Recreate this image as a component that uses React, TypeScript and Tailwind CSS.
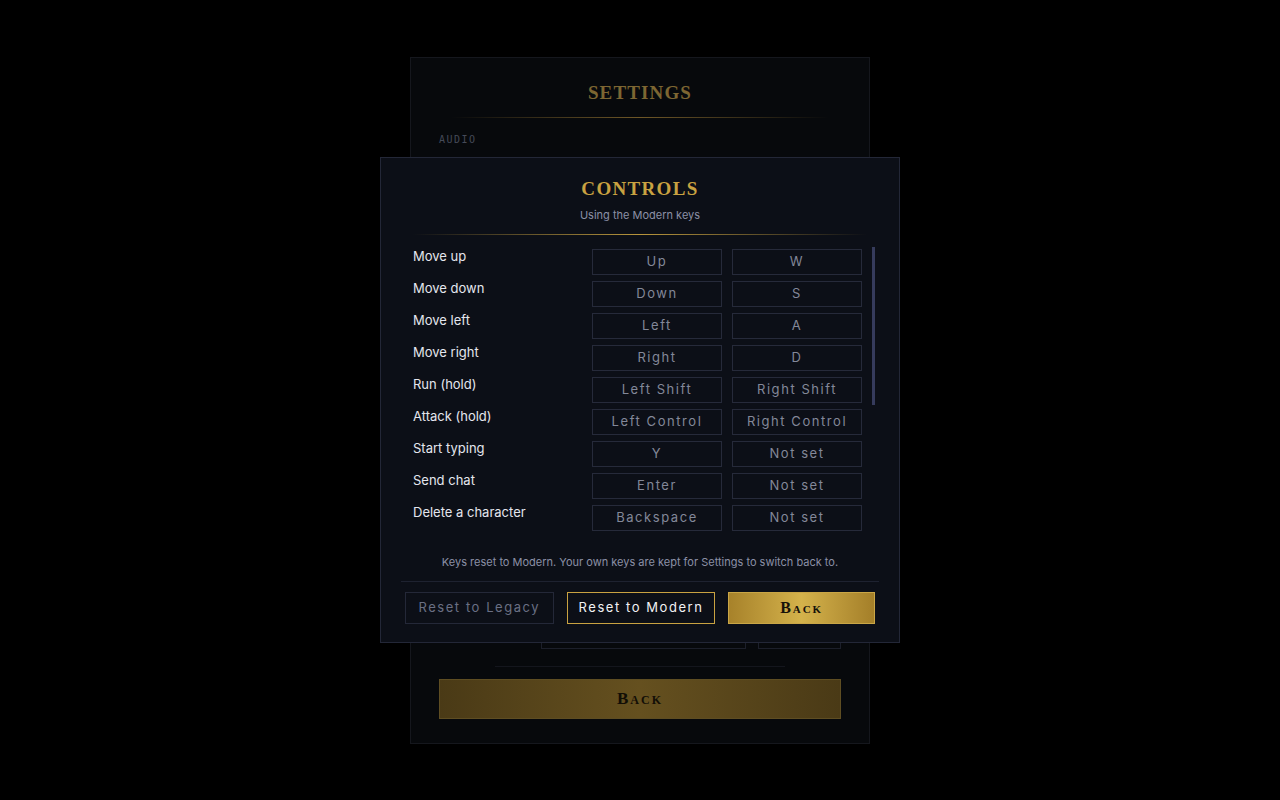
import React from 'react';

const bindings: [string, string, string][] = [
  ['Move up', 'Up', 'W'],
  ['Move down', 'Down', 'S'],
  ['Move left', 'Left', 'A'],
  ['Move right', 'Right', 'D'],
  ['Run (hold)', 'Left Shift', 'Right Shift'],
  ['Attack (hold)', 'Left Control', 'Right Control'],
  ['Start typing', 'Y', 'Not set'],
  ['Send chat', 'Enter', 'Not set'],
  ['Delete a character', 'Backspace', 'Not set'],
  ['Open map', 'M', 'Not set'],
  ['Toggle inventory', 'I', 'Tab'],
  ['Interact', 'E', 'Not set'],
  ['Pause', 'Escape', 'P'],
];

const serif = "font-['Liberation_Serif',serif]";
const sans = "font-['Inter','Noto_Sans',sans-serif]";

const SettingsPanel: React.FC = () => (
  <div className="w-[460px] h-[687px] bg-[#07090c] border border-[#15171d] flex flex-col px-7 pb-6">
    <h1 className={`${serif} text-center text-[19px] font-bold tracking-[0.06em] text-[#7d6632] mt-[22px] leading-[26px]`}>
      SETTINGS
    </h1>
    <div className="mx-3 mt-[11px] h-px bg-gradient-to-r from-transparent via-[#6e5727] to-transparent" />
    <div className="mt-[14px] font-['DejaVu_Sans_Mono',monospace] text-[10px] tracking-[0.15em] text-[#454a58]">
      AUDIO
    </div>
    <div className="flex-1" />
    <div className="flex items-center gap-3">
      <span className={`${sans} w-[90px] text-[13px] text-[#8a8e9c]`}>Key set</span>
      <div className="w-[205px] h-[30px] border border-[#1c1f2a]" />
      <div className="w-[83px] h-[30px] border border-[#1c1f2a]" />
    </div>
    <div className="mx-[56px] mt-[17px] h-px bg-[#14161d]" />
    <button className={`${serif} mt-3 h-[40px] w-full border border-[#5e4d22] bg-gradient-to-r from-[#4a3a16] via-[#65501f] to-[#4a3a16] text-[#120e06] text-[17px] font-bold tracking-[0.12em] [font-variant:small-caps]`}>
      Back
    </button>
  </div>
);

const KeyBox: React.FC<{ label: string }> = ({ label }) => (
  <div className={`${sans} w-[130px] h-[26px] border border-[#262a3a] flex items-center justify-center text-[13px] tracking-[0.12em] text-[#838899]`}>
    {label}
  </div>
);

const ControlsModal: React.FC = () => (
  <div className="w-[520px] h-[486px] bg-[#0c0f17] border border-[#232737] flex flex-col px-6">
    <h2 className={`${serif} text-center text-[19px] font-bold tracking-[0.07em] text-[#c9a241] mt-[19px] leading-[24px]`}>
      CONTROLS
    </h2>
    <p className={`${sans} text-center text-[11px] text-[#8b90a6] mt-[6px]`}>Using the Modern keys</p>
    <div className="mx-2 mt-[10px] h-px bg-gradient-to-r from-transparent via-[#b8953c] to-transparent" />
    <div className="mt-3 h-[288px] flex pl-2">
      <div className="flex-1 overflow-hidden pt-[2px]">
        {bindings.map(([action, primary, secondary]) => (
          <div key={action} className="flex h-[32px]">
            <span className={`${sans} flex-1 text-[13px] text-[#e4e6ee] leading-[15px]`}>{action}</span>
            <div className="flex gap-[10px] pr-[10px]">
              <KeyBox label={primary} />
              <KeyBox label={secondary} />
            </div>
          </div>
        ))}
      </div>
      <div className="w-[3px] h-full">
        <div className="h-[158px] bg-[#363b5c]" />
      </div>
    </div>
    <p className={`${sans} text-center text-[11px] text-[#8b90a6] mt-[20px] leading-[14px]`}>
      Keys reset to Modern. Your own keys are kept for Settings to switch back to.
    </p>
    <div className="-mx-1 mt-[12px] h-px bg-[#1e2230]" />
    <div className="flex gap-[13px] mt-[10px]">
      <button className={`${sans} w-[150px] h-[32px] border border-[#242838] text-[13px] tracking-[0.12em] text-[#6a6f84]`}>
        Reset to Legacy
      </button>
      <button className={`${sans} w-[150px] h-[32px] border border-[#c9a241] text-[13px] tracking-[0.12em] text-[#f2f2f4]`}>
        Reset to Modern
      </button>
      <button className={`${serif} w-[148px] h-[32px] border border-[#caa646] bg-gradient-to-r from-[#a7822a] via-[#d4b24b] to-[#a47f29] text-[#17120a] text-[16px] font-bold tracking-[0.12em] [font-variant:small-caps]`}>
        Back
      </button>
    </div>
  </div>
);

export default function App() {
  return (
    <div className="relative w-full h-screen bg-black flex items-center justify-center overflow-hidden">
      <SettingsPanel />
      <div className="absolute inset-0 flex items-center justify-center">
        <ControlsModal />
      </div>
    </div>
  );
}
